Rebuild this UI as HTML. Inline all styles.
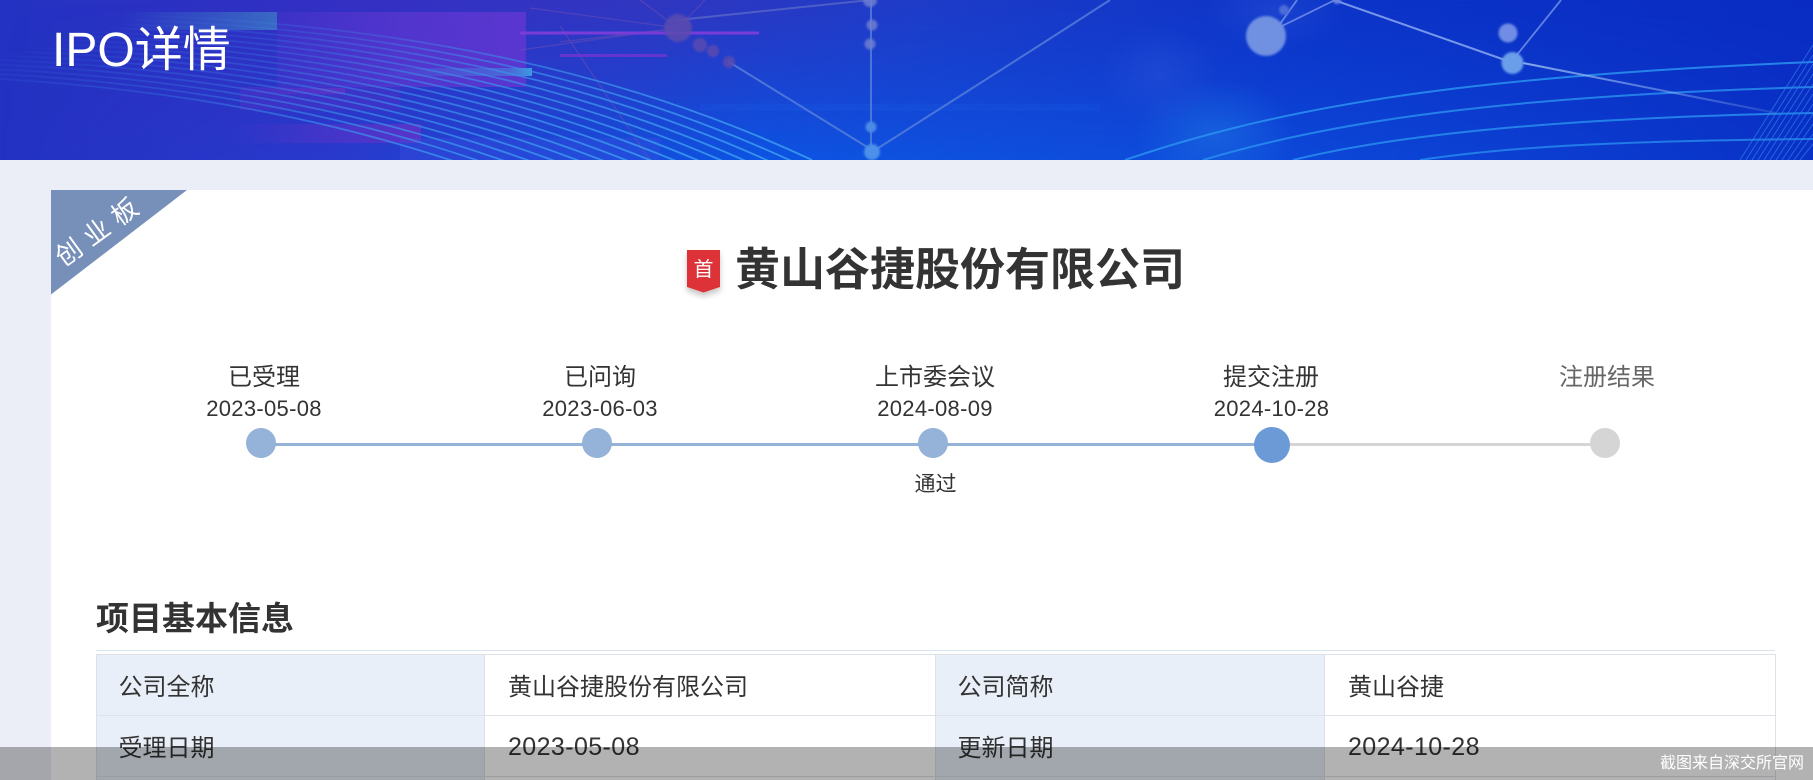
<!DOCTYPE html>
<html lang="zh-CN"><head><meta charset="utf-8"><title>IPO详情</title>
<style>
*{box-sizing:border-box}
html,body{margin:0;padding:0;width:1813px;height:780px;overflow:hidden;background:#ebeef6;font-family:"Liberation Sans","Noto Sans CJK SC",sans-serif;color:#333}
#w{position:relative;width:1813px;height:780px;overflow:hidden;background:#ebeef6}
.a{position:absolute;white-space:nowrap}
.c{transform:translate(-50%,-50%);text-align:center}
.lab{font-size:24px;line-height:30px}
.dat{font-size:22px;line-height:26px;letter-spacing:.3px}
.dot{position:absolute;border-radius:50%;width:30px;height:30px;top:428px;background:#95b3d8}
table{position:absolute;left:96px;top:654px;width:1679px;border-collapse:collapse;table-layout:fixed;font-size:24px}
td{height:61px;border:1px solid #dde1e8;padding:0 0 2px 23px;background:#fff;white-space:nowrap}
td.h{background:#e9eff8;padding-left:21.5px}
td.num{font-size:25px;letter-spacing:.4px;padding:2px 0 0 23px}
tr.e td{height:3px;padding:0;font-size:0;line-height:0;border-bottom:0}
</style></head><body><div id="w">
<svg class="a" style="left:0;top:0" width="1813" height="160" viewBox="0 0 1813 160">
<defs>
<linearGradient id="bg" x1="0" y1="0" x2="1" y2="0">
<stop offset="0" stop-color="#2332c2"/><stop offset=".2" stop-color="#3530c4"/><stop offset=".36" stop-color="#3136c0"/><stop offset=".5" stop-color="#1f3cc8"/><stop offset=".72" stop-color="#0c34c8"/><stop offset="1" stop-color="#0a2cc2"/>
</linearGradient>
<linearGradient id="bot" x1="0" y1="0" x2="0" y2="1">
<stop offset="0" stop-color="#0c48dc" stop-opacity="0"/><stop offset="1" stop-color="#0c54e2" stop-opacity="1"/>
</linearGradient>
<linearGradient id="botmask" x1="0" y1="0" x2="1" y2="0">
<stop offset="0" stop-color="#000"/><stop offset=".18" stop-color="#444"/><stop offset=".42" stop-color="#fff"/><stop offset=".7" stop-color="#aaa"/><stop offset="1" stop-color="#222"/>
</linearGradient>
<mask id="m1"><rect width="1813" height="160" fill="url(#botmask)"/></mask>
<radialGradient id="glow"><stop offset="0" stop-color="#1d74e4" stop-opacity=".55"/><stop offset="1" stop-color="#1d74e4" stop-opacity="0"/></radialGradient>
<radialGradient id="glow2"><stop offset="0" stop-color="#2b52d8" stop-opacity=".45"/><stop offset="1" stop-color="#2b52d8" stop-opacity="0"/></radialGradient>
<linearGradient id="pf" x1="0" y1="0" x2="1" y2="0"><stop offset="0" stop-color="#5c36d0" stop-opacity=".25"/><stop offset=".5" stop-color="#5c36d0" stop-opacity=".75"/><stop offset="1" stop-color="#5c36d0" stop-opacity=".95"/></linearGradient>
<linearGradient id="pl" x1="0" y1="0" x2="1" y2="0"><stop offset="0" stop-color="#6232c8" stop-opacity="0"/><stop offset="1" stop-color="#6232c8" stop-opacity=".85"/></linearGradient>
<linearGradient id="tl" x1="0" y1="0" x2="1" y2="0"><stop offset="0" stop-color="#3a70c4" stop-opacity="0"/><stop offset="1" stop-color="#3a70c4" stop-opacity=".9"/></linearGradient>
<linearGradient id="cy" x1="0" y1="0" x2="1" y2="0"><stop offset="0" stop-color="#3f8ee0" stop-opacity="0"/><stop offset=".85" stop-color="#3f8ee0" stop-opacity=".55"/><stop offset="1" stop-color="#3fa0e0" stop-opacity=".95"/></linearGradient>
<linearGradient id="cv" gradientUnits="userSpaceOnUse" x1="150" y1="0" x2="800" y2="0"><stop offset="0" stop-color="#3f8ce8" stop-opacity=".04"/><stop offset=".35" stop-color="#3f8ce8" stop-opacity=".3"/><stop offset=".62" stop-color="#3a90ea" stop-opacity=".7"/><stop offset="1" stop-color="#3a9cf0" stop-opacity=".9"/></linearGradient>
<linearGradient id="fl" gradientUnits="userSpaceOnUse" x1="1523" y1="0" x2="1780" y2="0"><stop offset="0" stop-color="#9fc4f4" stop-opacity=".8"/><stop offset="1" stop-color="#9fc4f4" stop-opacity=".15"/></linearGradient>
<filter id="bl" x="-30%" y="-30%" width="160%" height="160%"><feGaussianBlur stdDeviation="1"/></filter>
<path id="arc" d="M150 16C400 25 620 70 812 160" fill="none" stroke="url(#cv)" stroke-width="1.8"/>
</defs>
<rect width="1813" height="160" fill="url(#bg)"/>
<rect width="1813" height="160" fill="url(#bot)" mask="url(#m1)"/>
<ellipse cx="1215" cy="135" rx="80" ry="55" fill="url(#glow)"/>
<ellipse cx="1160" cy="75" rx="60" ry="50" fill="url(#glow2)"/>
<ellipse cx="1275" cy="10" rx="70" ry="40" fill="url(#glow2)"/>
<rect x="120" y="12" width="157" height="18" fill="url(#tl)"/>
<rect x="277" y="12" width="249" height="75" fill="url(#pf)"/>
<rect x="240" y="87" width="160" height="23" fill="#5030c8" opacity=".45"/>
<rect x="230" y="124" width="191" height="19" fill="url(#pl)"/>
<rect x="240" y="88" width="105" height="6" fill="url(#pl)"/>
<rect x="380" y="68" width="152" height="8" fill="url(#cy)"/>
<rect x="400" y="138" width="260" height="22" fill="#4050e0" opacity=".3"/>
<rect x="700" y="104" width="400" height="7" fill="#1c6ce8" opacity=".15"/>
<g fill="none" stroke="#7050b8" stroke-width="1.2" opacity=".5">
<path d="M678 28L530 8M678 28L520 50M678 28L640 0M678 28L705 0M678 28L560 42M560 26L650 160"/>
</g>
<path d="M678 20L870 0" stroke="#6e7cc8" stroke-width="2" opacity=".55"/>
<path d="M520 33H759" stroke="#7a3cd8" stroke-width="3"/>
<path d="M560 55.500H667" stroke="#7434d0" stroke-width="3" opacity=".8"/>
<use href="#arc"/><use href="#arc" transform="translate(-14 4)"/><use href="#arc" transform="translate(-28 8)"/><use href="#arc" transform="translate(-42 12)"/><use href="#arc" transform="translate(-56 16)"/><use href="#arc" transform="translate(-70 20)"/><use href="#arc" transform="translate(-84 24)"/><use href="#arc" transform="translate(-98 28)"/><use href="#arc" transform="translate(-112 32)"/><use href="#arc" transform="translate(-126 36)"/><use href="#arc" transform="translate(-140 40)"/><use href="#arc" transform="translate(-154 44)"/><use href="#arc" transform="translate(-168 48)"/><use href="#arc" transform="translate(-182 52)"/><use href="#arc" transform="translate(-196 56)"/><use href="#arc" transform="translate(-210 60)"/>
<g fill="none" stroke="#5d86dc" stroke-width="2" opacity=".75">
<path d="M729 62L872 150M871 0V150M872 152L1040 45L1110 0"/>
</g>
<path d="M1334 0L1505 60" stroke="#8aa8ee" stroke-width="2" opacity=".85" fill="none"/>
<path d="M1280 24L1297 0M1280 27L1335 0M1516 56L1561 0" stroke="#7f9cec" stroke-width="1.8" opacity=".75" fill="none"/>
<g fill="#5c4cb0" opacity=".85" filter="url(#bl)">
<circle cx="678" cy="28" r="14"/><circle cx="700" cy="45" r="7"/><circle cx="713" cy="51" r="6"/><circle cx="729" cy="62" r="6"/>
</g>
<g fill="#6e7ed0" opacity=".85" filter="url(#bl)">
<circle cx="870" cy="0" r="7"/><circle cx="872" cy="25" r="5.500"/><circle cx="870" cy="44" r="5.500"/>
</g>
<g filter="url(#bl)"><circle cx="871" cy="127" r="5.500" fill="#4c8ae6"/>
<circle cx="872" cy="152" r="8" fill="#4c90ea"/></g>
<path d="M1125 160C1300 100 1500 75 1813 62" fill="none" stroke="#2a92f0" stroke-width="2" opacity=".85"/>
<path d="M1203 160C1330 122 1500 96 1813 87" fill="none" stroke="#2a92f0" stroke-width="2" opacity=".8"/>
<path d="M1293 160C1400 134 1560 118 1813 113" fill="none" stroke="#2a92f0" stroke-width="2" opacity=".8"/>
<path d="M1420 160C1500 148 1600 141 1813 139" fill="none" stroke="#2a92f0" stroke-width="2" opacity=".75"/>
<path d="M1523 63L1776 113" stroke="url(#fl)" stroke-width="2" fill="none"/>
<g stroke="#2b86ee" stroke-width="1" opacity=".65" fill="none">
<path d="M1740 160L1813 45M1746 160L1813 55M1752 160L1813 64M1758 160L1813 74M1764 160L1813 84M1770 160L1813 94M1776 160L1813 104M1782 160L1813 114M1788 160L1813 124M1794 160L1813 134M1800 160L1813 144"/>
</g>
<g filter="url(#bl)">
<circle cx="1266" cy="36" r="20" fill="#7090e2"/>
<circle cx="1284" cy="10" r="5" fill="#4f6cd8"/>
<circle cx="1337" cy="0" r="4" fill="#6a86e0"/>
<circle cx="1508" cy="33" r="9.500" fill="#6f8ce4"/>
<circle cx="1512.500" cy="63" r="11" fill="#6a9eea"/>
</g>
</svg>
<div class="a" style="left:52px;top:20px;font-size:48px;line-height:62px;color:#fff">IPO详情</div>

<div class="a" style="left:51px;top:190px;width:1762px;height:590px;background:#fff"></div>
<svg class="a" style="left:51px;top:190px" width="136" height="105"><polygon points="0,0 136,0 0,104.500" fill="#7790ba"/></svg>
<div class="a c" style="left:97px;top:231.500px;font-size:26px;line-height:30px;color:#fff;transform:translate(-50%,-50%) rotate(-36deg);letter-spacing:.6px">创 业 板</div>

<svg class="a" style="left:680px;top:245px" width="50" height="60"><defs><filter id="sh" x="-40%" y="-40%" width="180%" height="180%"><feDropShadow dx="0" dy="4" stdDeviation="3" flood-color="#000" flood-opacity=".22"/></filter></defs><polygon points="7,5 40,5 40,42 23.500,47.500 7,42" fill="#dc3138" filter="url(#sh)"/></svg>
<div class="a c" style="left:703.500px;top:270px;font-size:20px;line-height:24px;color:#fff">首</div>
<div class="a" style="left:735px;top:241px;font-size:45px;line-height:58px;font-weight:700;color:#333">黄山谷捷股份有限公司</div>

<div class="a" style="left:261px;top:443px;width:1007px;height:3px;background:#95b3d8"></div>
<div class="a" style="left:1268px;top:443px;width:336px;height:3px;background:#d5d5d5"></div>
<div class="dot" style="left:246px"></div>
<div class="dot" style="left:582px"></div>
<div class="dot" style="left:918px"></div>
<div class="dot" style="left:1254px;top:427px;width:36px;height:36px;background:#6b9ad6"></div>
<div class="dot" style="left:1590px;background:#d5d5d5"></div>

<div class="a c lab" style="left:264px;top:378px">已受理</div>
<div class="a c dat" style="left:264px;top:409px">2023-05-08</div>
<div class="a c lab" style="left:600px;top:378px">已问询</div>
<div class="a c dat" style="left:600px;top:409px">2023-06-03</div>
<div class="a c lab" style="left:935px;top:378px">上市委会议</div>
<div class="a c dat" style="left:935px;top:409px">2024-08-09</div>
<div class="a c lab" style="left:1271px;top:378px">提交注册</div>
<div class="a c dat" style="left:1271.500px;top:409px">2024-10-28</div>
<div class="a c lab" style="left:1607px;top:378px;color:#666">注册结果</div>
<div class="a c" style="left:935.500px;top:485px;font-size:21px;line-height:26px">通过</div>

<div class="a" style="left:96px;top:597px;font-size:33px;line-height:44px;font-weight:700;color:#333">项目基本信息</div>
<div class="a" style="left:96px;top:650px;width:1679px;height:1px;background:#d9e4f1"></div>
<table>
<colgroup><col style="width:388px"><col style="width:451px"><col style="width:389px"><col style="width:451px"></colgroup>
<tr><td class="h">公司全称</td><td>黄山谷捷股份有限公司</td><td class="h">公司简称</td><td>黄山谷捷</td></tr>
<tr><td class="h">受理日期</td><td class="num">2023-05-08</td><td class="h">更新日期</td><td class="num">2024-10-28</td></tr>
<tr class="e"><td class="h"></td><td></td><td class="h"></td><td></td></tr>
</table>
<div class="a" style="left:0;top:747px;width:1813px;height:33px;background:rgba(0,0,0,.3)"></div>
<div class="a" style="left:1660px;top:752px;font-size:16px;line-height:24px;color:#fff">截图来自深交所官网</div>
</div></body></html>
